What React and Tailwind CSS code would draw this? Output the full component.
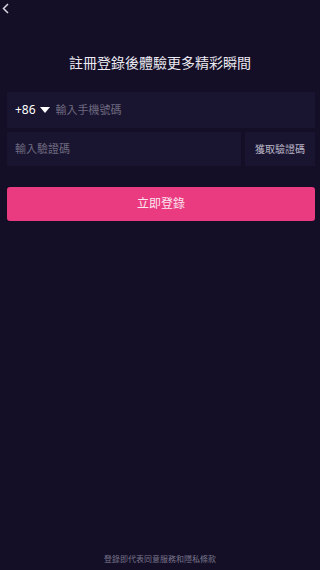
import React from "react";
import { useState } from "react";

export default function App() {
  const [phone, set_phone] = useState("");
  const [code, set_code] = useState("");

  return (
    <div
      className="relative w-[320px] h-[570px] bg-[#140f26] overflow-hidden"
      style={{ fontFamily: '"Noto Sans", "Noto Sans CJK TC", sans-serif' }}
    >
      <div className="h-[16px] pl-[2px] pt-[3px]">
        <svg width="8" height="11" viewBox="0 0 8 11">
          <path d="M6 1 L1.5 5.5 L6 10" stroke="#d8d6e0" strokeWidth="1.5" fill="none" />
        </svg>
      </div>

      <h1 className="mt-[37px] text-center text-[14px] leading-[20px] text-[#eceaf2]">
        註冊登錄後體驗更多精彩瞬間
      </h1>

      <div className="mt-[19px] ml-[7px] mr-[5px] flex flex-col gap-[4px]">
        <div className="h-[36px] bg-[#19142f] flex items-center pl-[8px]">
          <span className="text-[12px] text-white">+86</span>
          <svg className="ml-[4px]" width="10" height="6" viewBox="0 0 10 6">
            <path d="M0 0 L10 0 L5 6 Z" fill="#ffffff" />
          </svg>
          <input
            className="ml-[6px] flex-1 bg-transparent outline-none text-[11px] text-white placeholder-[#6e6a80]"
            placeholder="輸入手機號碼"
            value={phone}
            onChange={(e) => set_phone(e.target.value)}
          />
        </div>
        <div className="flex gap-[4px] h-[34px]">
          <div className="flex-1 bg-[#19142f] flex items-center pl-[8px]">
            <input
              className="w-full bg-transparent outline-none text-[11px] text-white placeholder-[#6e6a80]"
              placeholder="輸入驗證碼"
              value={code}
              onChange={(e) => set_code(e.target.value)}
            />
          </div>
          <button className="w-[70px] bg-[#19142f] text-[10px] text-[#b9b6c6]">
            獲取驗證碼
          </button>
        </div>
      </div>

      <button className="mt-[21px] ml-[7px] w-[308px] h-[34px] rounded-[3px] bg-[#ea3a80] text-[#fbe6ef] text-[12px]">
        立即登錄
      </button>

      <p className="absolute bottom-[5px] left-0 right-0 text-center text-[8px] text-[#77748a]">
        登錄即代表同意服務和隱私條款
      </p>
    </div>
  );
}
